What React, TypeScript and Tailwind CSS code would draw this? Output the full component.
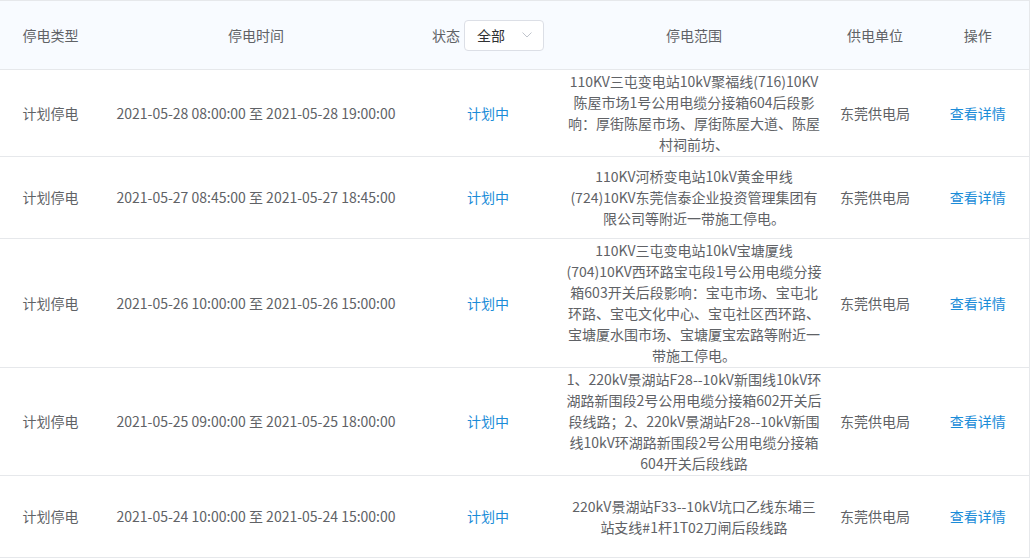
import React from 'react';

const rows = [
  {
    type: '计划停电',
    time: '2021-05-28 08:00:00 至 2021-05-28 19:00:00',
    status: '计划中',
    range: [
      '110KV三屯变电站10kV聚福线(716)10KV',
      '陈屋市场1号公用电缆分接箱604后段影',
      '响：厚街陈屋市场、厚街陈屋大道、陈屋',
      '村祠前坊、',
    ],
    unit: '东莞供电局',
  },
  {
    type: '计划停电',
    time: '2021-05-27 08:45:00 至 2021-05-27 18:45:00',
    status: '计划中',
    range: [
      '110KV河桥变电站10kV黄金甲线',
      '(724)10KV东莞信泰企业投资管理集团有',
      '限公司等附近一带施工停电。',
    ],
    unit: '东莞供电局',
  },
  {
    type: '计划停电',
    time: '2021-05-26 10:00:00 至 2021-05-26 15:00:00',
    status: '计划中',
    range: [
      '110KV三屯变电站10kV宝塘厦线',
      '(704)10KV西环路宝屯段1号公用电缆分接',
      '箱603开关后段影响：宝屯市场、宝屯北',
      '环路、宝屯文化中心、宝屯社区西环路、',
      '宝塘厦水围市场、宝塘厦宝宏路等附近一',
      '带施工停电。',
    ],
    unit: '东莞供电局',
  },
  {
    type: '计划停电',
    time: '2021-05-25 09:00:00 至 2021-05-25 18:00:00',
    status: '计划中',
    range: [
      '1、220kV景湖站F28--10kV新围线10kV环',
      '湖路新围段2号公用电缆分接箱602开关后',
      '段线路；2、220kV景湖站F28--10kV新围',
      '线10kV环湖路新围段2号公用电缆分接箱',
      '604开关后段线路',
    ],
    unit: '东莞供电局',
  },
  {
    type: '计划停电',
    time: '2021-05-24 10:00:00 至 2021-05-24 15:00:00',
    status: '计划中',
    range: [
      '220kV景湖站F33--10kV坑口乙线东埔三',
      '站支线#1杆1T02刀闸后段线路',
    ],
    unit: '东莞供电局',
  },
];

const App = () => {
  return (
    <div
      className="w-[1031px] h-[560px] bg-white text-[14px] text-[#606266] overflow-hidden"
      style={{ fontFamily: '"Noto Sans CJK SC", "Noto Sans", sans-serif' }}
    >
      <table className="w-[1029px] table-fixed border-collapse border-t border-r border-[#e6e8eb]">
        <colgroup>
          <col className="w-[101px]" />
          <col className="w-[310px]" />
          <col className="w-[154px]" />
          <col className="w-[258px]" />
          <col className="w-[104px]" />
          <col className="w-[102px]" />
        </colgroup>
        <thead>
          <tr className="bg-[#f8fbff] h-[69px] border-b border-[#e6e8eb]">
            <th className="font-normal text-center">停电类型</th>
            <th className="font-normal text-center">停电时间</th>
            <th className="font-normal">
              {/* status filter */}
              <div className="flex items-center justify-center gap-[4px]">
                <span>状态</span>
                <div className="w-[80px] h-[31px] border border-[#dcdfe6] rounded-[4px] bg-white flex items-center justify-between pl-[12px] pr-[11px] text-[#303133]">
                  <span>全部</span>
                  <svg width="10" height="6" viewBox="0 0 10 6" fill="none">
                    <path d="M0.5 0.5 L5 5 L9.5 0.5" stroke="#c0c4cc" strokeWidth="1" />
                  </svg>
                </div>
              </div>
            </th>
            <th className="font-normal text-center">停电范围</th>
            <th className="font-normal text-center">供电单位</th>
            <th className="font-normal text-center">操作</th>
          </tr>
        </thead>
        <tbody>
          {rows.map((row, i) => (
            <tr key={i} className="border-b border-[#e6e8eb] leading-[21px]">
              <td className="py-[30px] text-center">{row.type}</td>
              <td className="py-[30px] text-center whitespace-nowrap">{row.time}</td>
              <td className="py-[30px] text-center text-[#1a8cd8]">{row.status}</td>
              <td className="py-[1px] text-center whitespace-nowrap">
                {row.range.map((line, j) => (
                  <span key={j} className="block">{line}</span>
                ))}
              </td>
              <td className="py-[30px] text-center">{row.unit}</td>
              <td className="py-[30px] text-center text-[#1a8cd8]">查看详情</td>
            </tr>
          ))}
        </tbody>
      </table>
    </div>
  );
};

export default App;
